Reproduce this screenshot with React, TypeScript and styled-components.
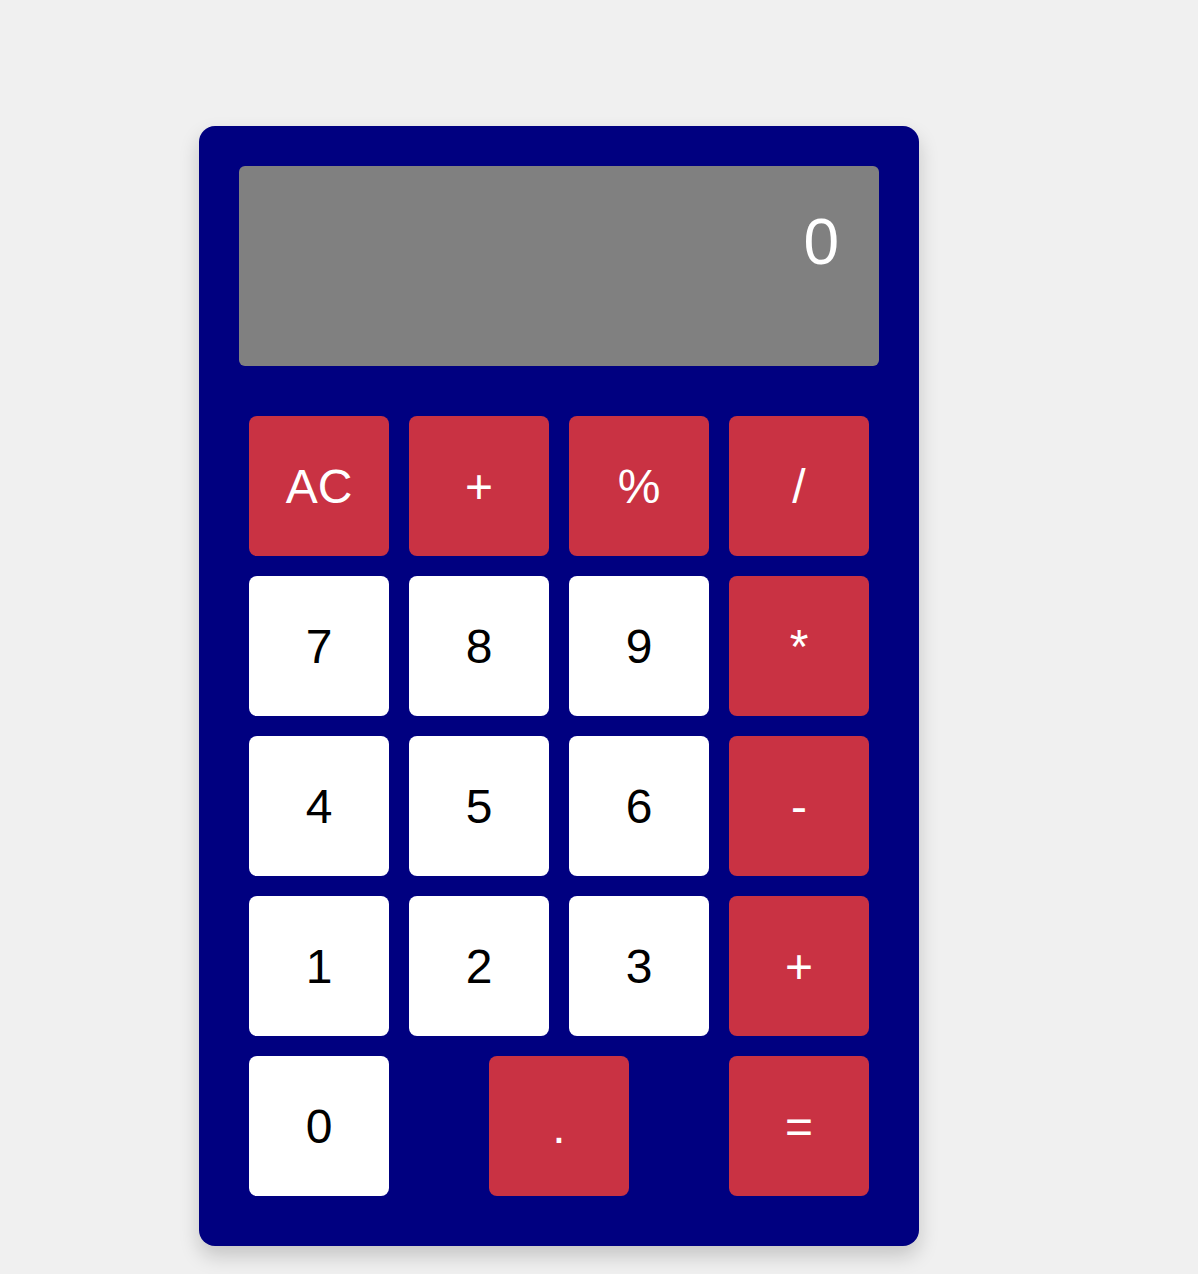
import * as React from "react";
import styled, { createGlobalStyle } from "styled-components";

const GlobalStyle = createGlobalStyle`
	body {
		margin: 0;
		background: #f0f0f0;
		font-family: "Liberation Sans", Arial, sans-serif;
	}
`;

const keys: { label: string; op?: boolean }[] = [
	{ label: "AC", op: true },
	{ label: "+", op: true },
	{ label: "%", op: true },
	{ label: "/", op: true },
	{ label: "7" },
	{ label: "8" },
	{ label: "9" },
	{ label: "*", op: true },
	{ label: "4" },
	{ label: "5" },
	{ label: "6" },
	{ label: "-", op: true },
	{ label: "1" },
	{ label: "2" },
	{ label: "3" },
	{ label: "+", op: true },
	{ label: "0" },
	{ label: ".", op: true },
	{ label: "=", op: true },
];

const App: React.FC = (): JSX.Element => {
	const [display] = React.useState("0");
	return (
		<Page>
			<GlobalStyle />
			<Calculator>
				<Screen>{display}</Screen>
				<Keypad>
					{keys.map((k, i) => (
						<Key key={i} $op={k.op}>
							{k.label}
						</Key>
					))}
				</Keypad>
			</Calculator>
		</Page>
	);
};

export default App;

const Page = styled.div`
	padding: 126px 0 28px 199px;
`;

const Calculator = styled.div`
	width: 640px;
	padding: 40px;
	background: #000080;
	border-radius: 16px;
	box-shadow: 0 10px 20px rgba(0, 0, 0, 0.18);
`;

const Screen = styled.div`
	height: 200px;
	box-sizing: border-box;
	padding: 39px 40px 0 40px;
	margin-bottom: 40px;
	background: #808080;
	border-radius: 6px;
	color: #ffffff;
	font-size: 64px;
	text-align: right;
`;

const Keypad = styled.div`
	display: flex;
	flex-wrap: wrap;
	justify-content: space-between;
`;

const Key = styled.button<{ $op?: boolean }>`
	width: 140px;
	height: 140px;
	margin: 10px;
	padding: 0;
	border: none;
	border-radius: 8px;
	display: flex;
	align-items: center;
	justify-content: center;
	font-family: "Liberation Sans", Arial, sans-serif;
	font-size: 48px;
	background: ${(p) => (p.$op ? "#c93243" : "#ffffff")};
	color: ${(p) => (p.$op ? "#ffffff" : "#000000")};
	cursor: pointer;
`;
